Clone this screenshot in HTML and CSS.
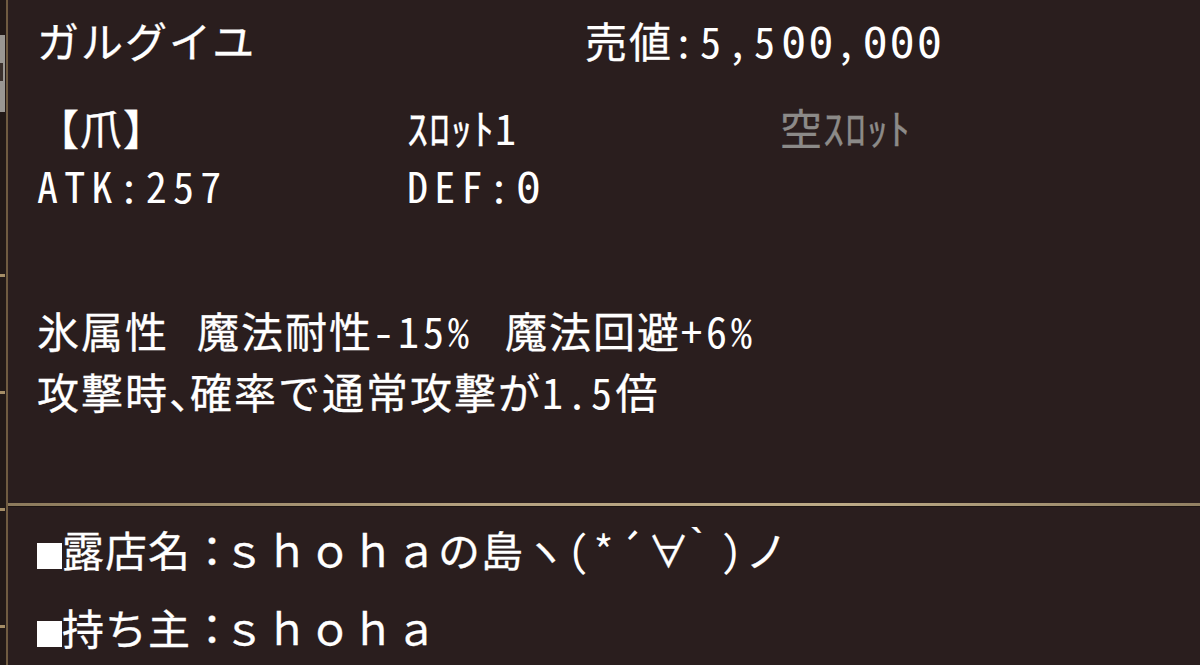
FILE: index.html
```html
<!DOCTYPE html>
<html lang="ja">
<head>
<meta charset="utf-8">
<title>ガルグイユ</title>
<link rel="stylesheet" href="styles.css">
</head>
<body>
<div class="screen">
  <div class="edge">
    <div class="edge-tab"><span class="edge-notch"></span></div>
    <span class="tick tick-a"></span>
    <span class="tick tick-b"></span>
    <span class="tick tick-c"></span>
    <span class="tick tick-d"></span>
  </div>
  <div class="vline"></div>
  <div class="panel">
    <section class="item">
      <div class="header">
        <div class="name">ガルグイユ</div>
        <div class="price">売値<span class="mono">:5,5<span class="z">00</span>,<span class="z">000</span></span></div>
      </div>
      <div class="stats">
        <div class="cell">【爪】</div>
        <div class="cell">ｽﾛｯﾄ<span class="mono">1</span></div>
        <div class="cell empty">空ｽﾛｯﾄ</div>
        <div class="cell mono">ATK:257</div>
        <div class="cell mono">DEF:<span class="z">0</span></div>
        <div class="cell"></div>
      </div>
      <div class="effects">
        <div class="line">氷属性<span class="gap1"></span>魔法耐性<span class="mono m4">-15%</span><span class="gap2"></span>魔法回避<span class="mono m4">+6%</span></div>
        <div class="line">攻撃時<span class="comma">、</span>確率で通常攻撃が<span class="mono m35">1.5</span>倍</div>
      </div>
    </section>
    <div class="divider"></div>
    <section class="shop">
      <div class="row"><span class="sq"></span>露店名<span class="colon">：</span>ｓｈｏｈａの島<span class="k-yo">ヽ</span><span class="mono m4">(*´</span><span class="k-all">∀</span><span class="k-grave">｀</span><span class="mono m4">)</span>ノ</div>
      <div class="row"><span class="sq"></span>持ち主<span class="colon">：</span>ｓｈｏｈａ</div>
    </section>
  </div>
</div>
</body>
</html>
```

FILE: styles.css
```css
html, body {
  margin: 0;
  padding: 0;
}
body {
  width: 1200px;
  height: 665px;
  overflow: hidden;
  background: #2a1e1e;
  font-family: "Noto Sans CJK JP", "Noto Sans", sans-serif;
  color: #ffffff;
  -webkit-text-stroke: 0.3px currentColor;
}
.screen {
  display: flex;
  width: 1200px;
  height: 665px;
  overflow: hidden;
}
.edge {
  position: relative;
  width: 6px;
  background: #221917;
  flex: none;
}
.edge-tab {
  position: absolute;
  left: 0;
  top: 35px;
  width: 5px;
  height: 77px;
  background: #9a9793;
}
.edge-notch {
  position: absolute;
  left: 0;
  top: 28px;
  width: 3px;
  height: 18px;
  background: #3a302c;
}
.tick {
  position: absolute;
  left: 0;
  width: 5px;
  height: 3px;
  background: #a48d66;
}
.tick-a { top: 274px; }
.tick-b { top: 391px; }
.tick-c { top: 508px; }
.tick-d { top: 625px; }
.vline {
  width: 2px;
  flex: none;
  background: #6f5b41;
}
.panel {
  flex: 1;
  display: flex;
  flex-direction: column;
  overflow: hidden;
  font-size: 42px;
  letter-spacing: 1px;
}
.item {
  flex: none;
  height: 503px;
  padding-left: 29px;
  box-sizing: border-box;
}
.mono {
  font-family: "Noto Sans Mono CJK JP", "DejaVu Sans Mono", monospace;
  letter-spacing: 6.2px;
  -webkit-text-stroke: 0;
}
.mono .z {
  font-family: "DejaVu Sans Mono", monospace;
  letter-spacing: 1.9px;
}
.m4 {
  letter-spacing: 4px;
}
.m35 {
  letter-spacing: 3.5px;
}
.header {
  display: flex;
  padding-top: 10px;
  height: 60px;
  line-height: 60px;
  letter-spacing: 2px;
}
.name {
  width: 548px;
}
.price .mono {
  letter-spacing: 6px;
}
.stats {
  margin-top: 28px;
  display: grid;
  grid-template-columns: 370px 373px 1fr;
  grid-auto-rows: 58px;
  line-height: 58px;
}
.empty {
  color: #8c8a88;
}
.effects {
  margin-top: 85px;
  line-height: 61px;
  letter-spacing: 2px;
}
.gap1 {
  display: inline-block;
  width: 28px;
}
.gap2 {
  display: inline-block;
  width: 32px;
}
.comma {
  font-feature-settings: "halt";
  letter-spacing: 0;
}
.divider {
  height: 3px;
  flex: none;
  background: linear-gradient(90deg, #8c7a5c 0%, #b5a280 40%, #bcaa86 70%, #928163 100%);
  box-shadow: 0 1px 0 #1c1412;
}
.shop {
  flex: none;
  padding-top: 4px;
  padding-left: 29px;
  line-height: 78px;
}
.row {
  white-space: nowrap;
}
.colon {
  letter-spacing: -10px;
}
.k-yo {
  letter-spacing: 2px;
}
.k-all {
  letter-spacing: -12px;
}
.k-grave {
  letter-spacing: 1px;
}
.sq {
  display: inline-block;
  width: 25px;
  height: 26px;
  background: #ffffff;
  vertical-align: -2px;
}
```
